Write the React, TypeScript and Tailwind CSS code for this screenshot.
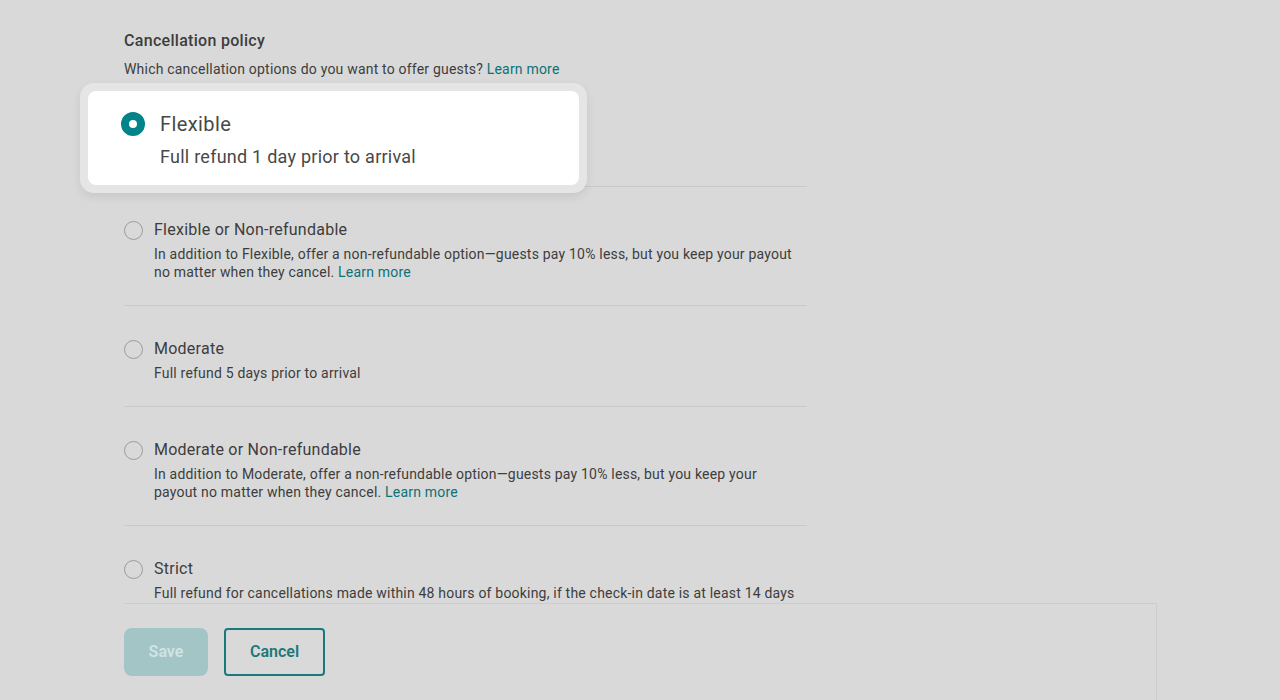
import React from "react";

type Option = {
  title: string;
  desc: string;
  link?: boolean;
};

const options: Option[] = [
  {
    title: "Flexible or Non-refundable",
    desc: "In addition to Flexible, offer a non-refundable option—guests pay 10% less, but you keep your payout no matter when they cancel.",
    link: true,
  },
  { title: "Moderate", desc: "Full refund 5 days prior to arrival" },
  {
    title: "Moderate or Non-refundable",
    desc: "In addition to Moderate, offer a non-refundable option—guests pay 10% less, but you keep your payout no matter when they cancel.",
    link: true,
  },
  {
    title: "Strict",
    desc: "Full refund for cancellations made within 48 hours of booking, if the check-in date is at least 14 days away. 50% refund for cancellations made at least 7 days before check-in.",
  },
];

function Row({ opt }: { opt: Option }) {
  return (
    <div className="border-b border-[#c9c9c9] pt-[32px] pb-[24px]">
      <div className="flex items-start gap-[11px]">
        <span className="mt-[2px] h-[19px] w-[19px] shrink-0 rounded-full border border-[#9b9b9b]" />
        <div className="pr-[8px]">
          <div className="text-[16px] leading-[22px] tracking-[0.25px] text-[#3d3d3d]">{opt.title}</div>
          <p className="mt-[4px] text-[14px] leading-[18px] tracking-[0.2px] text-[#3d3d3d]">
            {opt.desc}
            {opt.link && <span className="text-[#0b7276]"> Learn more</span>}
          </p>
        </div>
      </div>
    </div>
  );
}

export default function App() {
  return (
    <div
      className="relative flex h-[700px] w-[1280px] flex-col overflow-hidden bg-[#d9d9d9]"
      style={{ fontFamily: "Roboto, 'Noto Sans', sans-serif" }}
    >
      {/* scrolling content */}
      <div className="flex-1 overflow-hidden pl-[124px] pt-[30px]">
        <div className="w-[683px]">
          <h2 className="text-[16px] font-medium leading-[22px] tracking-[0.3px] text-[#3d3d3d]">Cancellation policy</h2>
          <p className="mt-[8px] text-[14px] leading-[18px] tracking-[0.2px] text-[#3d3d3d]">
            Which cancellation options do you want to offer guests?{" "}
            <span className="text-[#0b7276]">Learn more</span>
          </p>

          {/* original flexible row, hidden under the highlight */}
          <div className="h-[109px] border-b border-[#c9c9c9]" />

          {options.map((o) => (
            <Row key={o.title} opt={o} />
          ))}
        </div>
      </div>

      {/* footer */}
      <div className="ml-[124px] h-[97px] w-[1033px] shrink-0 border-t border-r border-[#cdcdcd] bg-[#d9d9d9]">
        <div className="flex items-center gap-4 pt-[24px]">
          <button className="h-[48px] w-[84px] rounded-lg bg-[#a3c5c6] text-[16px] font-semibold text-[#d2e3e3]">
            Save
          </button>
          <button className="h-[48px] w-[101px] rounded-[4px] border-2 border-[#1b797b] text-[16px] font-semibold text-[#1b797b]">
            Cancel
          </button>
        </div>
      </div>

      {/* highlighted card */}
      <div className="absolute left-[80px] top-[83px] rounded-[14px] bg-[#e5e5e5] p-2 shadow-[0_4px_10px_rgba(0,0,0,0.08)]">
        <div className="flex h-[94px] w-[491px] items-start gap-[15px] rounded-lg bg-white pl-[33px] pt-[21px]">
          <span className="h-[24px] w-[24px] shrink-0 rounded-full border-[8px] border-[#008489] bg-white" />
          <div className="-mt-[1px]">
            <div className="text-[20px] leading-[26px] tracking-[0.4px] text-[#484848]">Flexible</div>
            <div className="mt-[8px] text-[18px] leading-[24px] tracking-[0.25px] text-[#484848]">Full refund 1 day prior to arrival</div>
          </div>
        </div>
      </div>
    </div>
  );
}
